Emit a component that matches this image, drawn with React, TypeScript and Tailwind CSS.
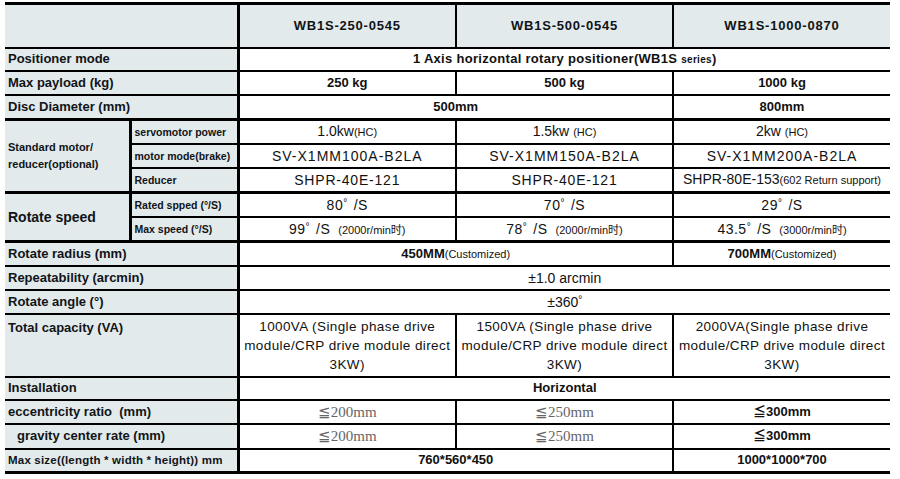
const labelBase = 'p-0 px-[3px] bg-[#e3eaeb] text-left font-bold leading-[16px] text-[#101418] border-b-2 border-black whitespace-nowrap'
const label = `${labelBase} text-[13px]`
const sub = 'p-0 px-[3px] bg-[#e3eaeb] text-left font-bold text-[10.5px] leading-[16px] text-[#101418] border-b-2 border-l-[3px] border-black whitespace-nowrap'
const val = 'p-0 bg-white text-center leading-[16px] text-[#111] border-b-2 border-l-2 border-black whitespace-nowrap'
const first = 'border-l-[3px]'

function Deg({ v, note }: { v: string; note?: string }) {
  return (
    <span className="text-[14px] tracking-[0.5px]">
      {v}
      <span className="relative -top-[4px] text-[10px] leading-none">°</span>
      <span className="ml-[6px]">/S</span>
      {note && (
        <span className="ml-[8px] text-[11px] leading-none tracking-normal">
          ({note}时)
        </span>
      )}
    </span>
  )
}

const Small = ({ children }: { children: React.ReactNode }) => (
  <span className="text-[11px] font-normal">{children}</span>
)

const Serif = ({ children }: { children: React.ReactNode }) => (
  <span className="font-['Liberation_Serif',serif] text-[15px] text-[#666]">{children}</span>
)

export default function App() {
  return (
    <div className="h-[479px] w-[900px] overflow-hidden bg-white pt-[2px] font-['Liberation_Sans','Noto_Sans_CJK_SC',sans-serif]">
      <table className="ml-[5px] w-[885px] table-fixed border-collapse border-t-[3px] border-black">
        <colgroup>
          <col className="w-[125px]" />
          <col className="w-[108px]" />
          <col className="w-[218px]" />
          <col className="w-[217px]" />
          <col className="w-[217px]" />
        </colgroup>
        <tbody>
          <tr className="h-[44px]">
            <td colSpan={2} className="p-0 bg-[#e3eaeb] border-b-2 border-black" />
            {['WB1S-250-0545', 'WB1S-500-0545', 'WB1S-1000-0870'].map((h, i) => (
              <td
                key={h}
                className={`p-0 bg-[#e3eaeb] text-center text-[13px] font-bold tracking-[0.8px] text-[#101418] border-b-2 border-black ${i === 0 ? 'border-l-[3px]' : 'border-l-2'}`}
              >
                {h}
              </td>
            ))}
          </tr>
          <tr className="h-[23px]">
            <td colSpan={2} className={label}>Positioner mode</td>
            <td colSpan={3} className={`${val} ${first} text-[13px] font-bold tracking-[0.3px]`}>
              1 Axis horizontal rotary positioner(WB1S <span className="text-[10px]">series</span>)
            </td>
          </tr>
          <tr className="h-[24px]">
            <td colSpan={2} className={label}>Max payload (kg)</td>
            <td className={`${val} ${first} text-[13px] font-bold`}>250 kg</td>
            <td className={`${val} text-[13px] font-bold`}>500 kg</td>
            <td className={`${val} text-[13px] font-bold`}>1000 kg</td>
          </tr>
          <tr className="h-[25px]">
            <td colSpan={2} className={`${label} border-b-[3px]`}>Disc Diameter (mm)</td>
            <td colSpan={2} className={`${val} ${first} border-b-[3px] text-[13px] font-bold`}>500mm</td>
            <td className={`${val} border-b-[3px] text-[13px] font-bold`}>800mm</td>
          </tr>
          <tr className="h-[24px]">
            <td rowSpan={3} className={`${labelBase} border-b-[3px] text-[11px] leading-[17px]`}>
              Standard motor/
              <br />
              reducer(optional)
            </td>
            <td className={sub}>servomotor power</td>
            <td className={`${val} ${first} text-[14px]`}>1.0kw<Small>(HC)</Small></td>
            <td className={`${val} text-[14px]`}>1.5kw <Small>(HC)</Small></td>
            <td className={`${val} text-[14px]`}>2kw <Small>(HC)</Small></td>
          </tr>
          <tr className="h-[24px]">
            <td className={sub}>motor mode(brake)</td>
            <td className={`${val} ${first} text-[14px] tracking-[1px]`}>SV-X1MM100A-B2LA</td>
            <td className={`${val} text-[14px] tracking-[1px]`}>SV-X1MM150A-B2LA</td>
            <td className={`${val} text-[14px] tracking-[1px]`}>SV-X1MM200A-B2LA</td>
          </tr>
          <tr className="h-[25px]">
            <td className={`${sub} border-b-[3px]`}>Reducer</td>
            <td className={`${val} ${first} border-b-[3px] text-[14px] tracking-[0.8px]`}>SHPR-40E-121</td>
            <td className={`${val} border-b-[3px] text-[14px] tracking-[0.8px]`}>SHPR-40E-121</td>
            <td className={`${val} border-b-[3px] text-[14px]`}>
              SHPR-80E-153<span className="text-[11px]">(602 Return support)</span>
            </td>
          </tr>
          <tr className="h-[24px]">
            <td rowSpan={2} className={`${labelBase} border-b-[3px] text-[14px]`}>Rotate speed</td>
            <td className={sub}>Rated spped (°/S)</td>
            <td className={`${val} ${first}`}><Deg v="80" /></td>
            <td className={val}><Deg v="70" /></td>
            <td className={val}><Deg v="29" /></td>
          </tr>
          <tr className="h-[25px]">
            <td className={`${sub} border-b-[3px]`}>Max speed (°/S)</td>
            <td className={`${val} ${first} border-b-[3px]`}><Deg v="99" note="2000r/min" /></td>
            <td className={`${val} border-b-[3px]`}><Deg v="78" note="2000r/min" /></td>
            <td className={`${val} border-b-[3px]`}><Deg v="43.5" note="3000r/min" /></td>
          </tr>
          <tr className="h-[24px]">
            <td colSpan={2} className={label}>Rotate radius (mm)</td>
            <td colSpan={2} className={`${val} ${first} text-[13px] font-bold`}>450MM<Small>(Customized)</Small></td>
            <td className={`${val} text-[13px] font-bold`}>700MM<Small>(Customized)</Small></td>
          </tr>
          <tr className="h-[24px]">
            <td colSpan={2} className={label}>Repeatability (arcmin)</td>
            <td colSpan={3} className={`${val} ${first} text-[14px]`}>±1.0 arcmin</td>
          </tr>
          <tr className="h-[24px]">
            <td colSpan={2} className={label}>Rotate angle (°)</td>
            <td colSpan={3} className={`${val} ${first} text-[14px]`}>
              ±360<span className="relative -top-[4px] text-[10px] leading-none">°</span>
            </td>
          </tr>
          <tr className="h-[63px]">
            <td colSpan={2} className={`${label} align-top pt-[5px]`}>Total capacity (VA)</td>
            {['1000VA (Single phase drive', '1500VA (Single phase drive', '2000VA(Single phase drive'].map((t, i) => (
              <td
                key={t}
                className={`${val} ${i === 0 ? first : ''} text-[13.5px] leading-[19px] tracking-[0.4px]`}
              >
                {t}
                <br />
                module/CRP drive module direct
                <br />
                3KW)
              </td>
            ))}
          </tr>
          <tr className="h-[23px]">
            <td colSpan={2} className={label}>Installation</td>
            <td colSpan={3} className={`${val} ${first} text-[13px] font-bold`}>Horizontal</td>
          </tr>
          <tr className="h-[24px]">
            <td colSpan={2} className={label}>eccentricity ratio &nbsp;(mm)</td>
            <td className={`${val} ${first}`}><Serif>≦200mm</Serif></td>
            <td className={val}><Serif>≦250mm</Serif></td>
            <td className={`${val} text-[13px] font-bold`}>≦300mm</td>
          </tr>
          <tr className="h-[25px]">
            <td colSpan={2} className={`${label} pl-[12px]`}>gravity center rate (mm)</td>
            <td className={`${val} ${first}`}><Serif>≦200mm</Serif></td>
            <td className={val}><Serif>≦250mm</Serif></td>
            <td className={`${val} text-[13px] font-bold`}>≦300mm</td>
          </tr>
          <tr className="h-[24px]">
            <td colSpan={2} className={`${labelBase} border-b-[3px] text-[11.5px] tracking-[0.2px]`}>
              Max size((length * width * height)) mm
            </td>
            <td colSpan={2} className={`${val} ${first} border-b-[3px] text-[13px] font-bold`}>760*560*450</td>
            <td className={`${val} border-b-[3px] text-[13px] font-bold`}>1000*1000*700</td>
          </tr>
        </tbody>
      </table>
    </div>
  )
}
